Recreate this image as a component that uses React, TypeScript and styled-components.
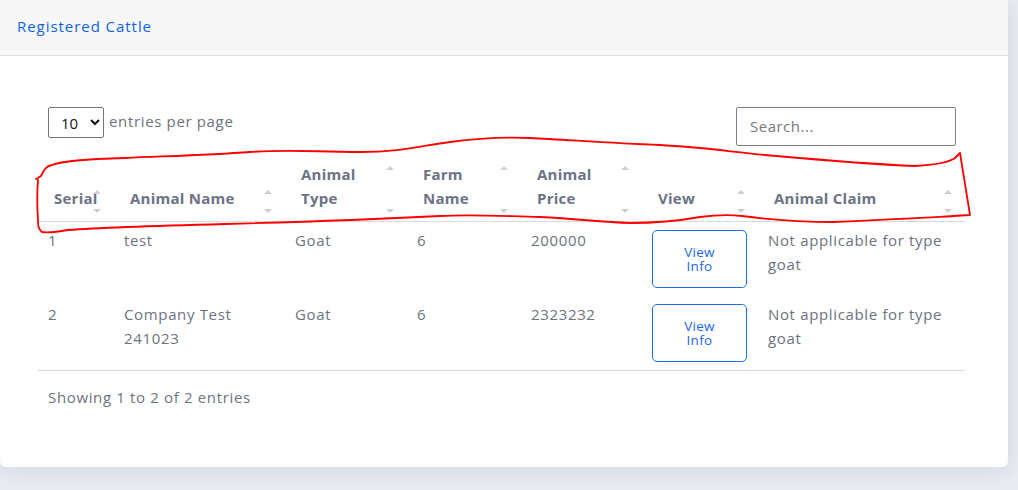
import styled, { createGlobalStyle } from "styled-components";

interface ICattle {
  serial: number;
  name: string;
  type: string;
  farm: string;
  price: string;
  claim: string;
}

const rows: ICattle[] = [
  { serial: 1, name: "test", type: "Goat", farm: "6", price: "200000", claim: "Not applicable for type goat" },
  { serial: 2, name: "Company Test 241023", type: "Goat", farm: "6", price: "2323232", claim: "Not applicable for type goat" },
];

const columns = [
  { label: "Serial", width: 76 },
  { label: "Animal Name", width: 171 },
  { label: "Animal Type", width: 122 },
  { label: "Farm Name", width: 114 },
  { label: "Animal Price", width: 121 },
  { label: "View", width: 116 },
  { label: "Animal Claim", width: 207 },
];

const App = () => {
  return (
    <Page>
      <GlobalStyle />
      <Card>
        <CardHeader>
          <CardTitle>Registered Cattle</CardTitle>
        </CardHeader>
        <CardBody>
          <Toolbar>
            <PerPage>
              <Select defaultValue="10">
                <option value="5">5</option>
                <option value="10">10</option>
                <option value="15">15</option>
                <option value="20">20</option>
              </Select>
              <PerPageLabel>entries per page</PerPageLabel>
            </PerPage>
            <Search placeholder="Search..." />
          </Toolbar>
          <Table>
            <colgroup>
              {columns.map((c) => (
                <col key={c.label} style={{ width: c.width }} />
              ))}
            </colgroup>
            <thead>
              <tr>
                {columns.map((c) => (
                  <Th key={c.label}>
                    <Sorter>{c.label}</Sorter>
                  </Th>
                ))}
              </tr>
            </thead>
            <tbody>
              {rows.map((r) => (
                <tr key={r.serial}>
                  <Td>{r.serial}</Td>
                  <Td>{r.name}</Td>
                  <Td>{r.type}</Td>
                  <Td>{r.farm}</Td>
                  <Td>{r.price}</Td>
                  <Td>
                    <InfoButton>
                      View
                      <br />
                      Info
                    </InfoButton>
                  </Td>
                  <Td>{r.claim}</Td>
                </tr>
              ))}
            </tbody>
          </Table>
          <Info>Showing 1 to 2 of 2 entries</Info>
        </CardBody>
      </Card>
      <Scribble viewBox="0 0 1018 490" width="1018" height="490">
        <path
          d="M36,179 L41,176 C44,170 46,166 52,165 C62,161 90,159 125,158 C170,156 210,155 250,152 C290,149 315,152 360,152 C400,152 420,146 450,142 C480,138 505,137 530,138 C570,140 610,143 660,145 C700,147 725,151 765,155 C810,159 865,164 915,166 C935,165 948,163 955,158 L960,153 L970,215 C940,217 880,220 833,222 C795,222 765,219 742,216 C727,214 715,215 700,217 C672,222 652,223 630,223 C600,222 580,219 540,217 C500,216 470,214 440,216 C380,219 300,222 225,224 C150,226 95,228 68,230 C57,232 47,233 42,232 C38,229 38,225 38,220 C37,205 37,192 38,180"
          fill="none"
          stroke="#ff0000"
          strokeWidth="1.8"
          strokeLinejoin="round"
          strokeLinecap="round"
        />
      </Scribble>
    </Page>
  );
};

const GlobalStyle = createGlobalStyle`
  body {
    margin: 0;
    background: #e8ebf2;
    font-family: "Open Sans", "Liberation Sans", sans-serif;
  }
  * { box-sizing: border-box; }
`;

const Page = styled.div`
  position: relative;
  width: 1018px;
  height: 490px;
  overflow: hidden;
`;

const Card = styled.div`
  width: 1008px;
  height: 467px;
  background: #ffffff;
  border-radius: 0 0 6px 6px;
  box-shadow: 0 4px 18px rgba(34, 41, 67, 0.1);
`;

const CardHeader = styled.div`
  height: 56px;
  display: flex;
  align-items: center;
  padding: 0 17px 4px;
  background: #f7f7f7;
  border-bottom: 1px solid #dedede;
`;

const CardTitle = styled.span`
  color: #0d63e8;
  font-size: 15px;
  font-weight: 500;
  letter-spacing: 0.95px;
`;

const CardBody = styled.div`
  padding: 51px 42px 0 38px;
  font-size: 15px;
  letter-spacing: 0.65px;
  color: #6c7380;
`;

const Toolbar = styled.div`
  display: flex;
  justify-content: space-between;
  align-items: flex-start;
  padding: 0 10px;
  height: 39px;
  margin-bottom: 11px;
`;

const PerPage = styled.label`
  display: flex;
  align-items: center;
  gap: 5px;
`;

const Select = styled.select`
  width: 56px;
  height: 31px;
  padding: 0 4px 0 8px;
  border: 1px solid #767676;
  border-radius: 2px;
  background: #fff;
  color: #111;
  font-family: inherit;
  font-size: 15px;
`;

const PerPageLabel = styled.span`
  margin-bottom: 3px;
  color: #6c7380;
`;

const Search = styled.input`
  width: 220px;
  height: 39px;
  padding: 0 13px 2px;
  border: 1px solid #808080;
  border-radius: 2px;
  font-family: inherit;
  font-size: 15px;
  letter-spacing: 0.5px;
  color: #333;
  &::placeholder {
    color: #7a7a7a;
  }
`;

const Table = styled.table`
  width: 927px;
  table-layout: fixed;
  border-collapse: collapse;
  tbody {
    border-bottom: 1px solid #dadada;
  }
`;

const Th = styled.th`
  padding: 5px 10px 8px;
  vertical-align: bottom;
  text-align: left;
  border-bottom: 1px solid #dadada;
`;

const Sorter = styled.span`
  position: relative;
  display: inline-block;
  width: 100%;
  padding: 0 20px 3px 6px;
  color: #6b7384;
  font-size: 15px;
  font-weight: 700;
  line-height: 24px;
  letter-spacing: 0.25px;

  &::before,
  &::after {
    content: "";
    position: absolute;
    right: 3px;
    width: 0;
    height: 0;
    border-left: 4px solid transparent;
    border-right: 4px solid transparent;
  }
  &::after {
    top: 4px;
    border-bottom: 4px solid #cfcfcf;
  }
  &::before {
    bottom: 0;
    border-top: 4px solid #cfcfcf;
  }
`;

const Td = styled.td`
  padding: 6px 10px 8px;
  vertical-align: top;
  line-height: 24px;
`;

const InfoButton = styled.button`
  width: 95px;
  height: 58px;
  margin-top: 2px;
  display: flex;
  align-items: center;
  justify-content: center;
  padding: 0 0 1px;
  border: 1px solid #1a6ef0;
  border-radius: 5px;
  background: #ffffff;
  color: #1a66e6;
  font-family: inherit;
  font-size: 13.5px;
  line-height: 14px;
  letter-spacing: 0.3px;
`;

const Info = styled.div`
  padding: 14px 10px;
  line-height: 24px;
`;

const Scribble = styled.svg`
  position: absolute;
  left: 0;
  top: 0;
  pointer-events: none;
`;

export default App;
